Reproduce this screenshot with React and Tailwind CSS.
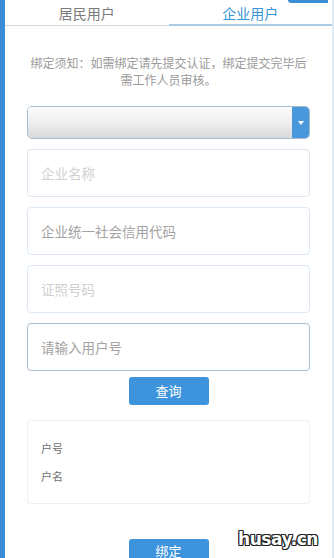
import { useState } from "react";

const font = { fontFamily: '"Noto Sans CJK SC", "Noto Sans", sans-serif' };

function Field({ placeholder, tone = "light", strong = false }) {
  return (
    <div
      className={`h-[48px] shrink-0 rounded-[4px] border bg-white flex items-center px-[13px] ${
        strong ? "border-[#a9bdd0]" : "border-[#dce9f4]"
      }`}
    >
      <input
        placeholder={placeholder}
        className={`w-full bg-transparent outline-none text-[13.5px] ${
          tone === "light" ? "placeholder:text-[#d0d0d0]" : "placeholder:text-[#a3a3a3]"
        }`}
        style={font}
      />
    </div>
  );
}

export default function App() {
  const [tab, setTab] = useState(1);

  return (
    <div className="w-[334px] h-[558px] overflow-hidden bg-white flex items-start" style={font}>
      <div className="w-[5px] h-full shrink-0 bg-[#3a8ed6]" />
      <div className="flex-1 h-full flex flex-col relative border-r-2 border-[#dcebf8]">
        <div className="absolute right-[4px] top-0 w-[40px] h-[3px] rounded-bl-[6px] bg-[#3a8ed6]" />

        <div className="flex shrink-0 h-[26px] border-b border-[#d6d6d6]">
          {["居民用户", "企业用户"].map((t, i) => (
            <button
              key={t}
              onClick={() => setTab(i)}
              className={`flex-1 flex items-end justify-center text-[14px] leading-none pb-[4px] -mb-px border-b-2 ${
                tab === i
                  ? "text-[#3c95d6] border-[#a9cbe6]"
                  : "text-[#7a7a7a] border-transparent"
              }`}
            >
              {t}
            </button>
          ))}
        </div>

        <p className="shrink-0 mt-[28px] px-[20px] text-center text-[12px] leading-[17px] text-[#9a9a9a] whitespace-nowrap">
          绑定须知：如需绑定请先提交认证，绑定提交完毕后
          <br />
          需工作人员审核。
        </p>

        <div className="shrink-0 px-[22px] mt-[18px] flex flex-col">
          <div className="h-[33px] shrink-0 rounded-[5px] border border-[#a8bccc] flex overflow-hidden">
            <div className="flex-1 bg-gradient-to-b from-[#fafafa] via-[#efefef] to-[#d9d9d9]" />
            <div className="w-[17px] bg-[#4a98dc] flex items-center justify-center">
              <span className="block w-0 h-0 border-l-[3px] border-r-[3px] border-t-[4px] border-l-transparent border-r-transparent border-t-white" />
            </div>
          </div>

          <div className="mt-[10px] flex flex-col gap-[10px]">
            <Field placeholder="企业名称" />
            <Field placeholder="企业统一社会信用代码" tone="dark" />
            <Field placeholder="证照号码" />
            <Field placeholder="请输入用户号" tone="dark" strong />
          </div>

          <button className="self-center shrink-0 mt-[6px] w-[80px] h-[28px] rounded-[3px] bg-[#3d93dc] text-white text-[13px]">
            查询
          </button>

          <div className="shrink-0 mt-[15px] h-[84px] rounded-[4px] border border-[#f0f0f0] px-[13px] pt-[19px] flex flex-col gap-[11px] text-[11px] text-[#6f6f6f]">
            <span>户号</span>
            <span>户名</span>
          </div>

          <button className="self-center shrink-0 mt-[35px] w-[80px] h-[30px] rounded-[3px] bg-[#3d93dc] text-white text-[13px] pb-[6px]">
            绑定
          </button>
        </div>

        <span
          className="absolute right-[14px] bottom-[6px] text-[17px] font-black text-white tracking-tight"
          style={{
            fontFamily: '"DejaVu Sans", sans-serif',
            textShadow:
              "1px 0 0 #222, -1px 0 0 #222, 0 1px 0 #222, 0 -1px 0 #222, 1px 1px 0 #222, -1px -1px 0 #222, 1px -1px 0 #222, -1px 1px 0 #222",
          }}
        >
          husay.cn
        </span>
      </div>
    </div>
  );
}
